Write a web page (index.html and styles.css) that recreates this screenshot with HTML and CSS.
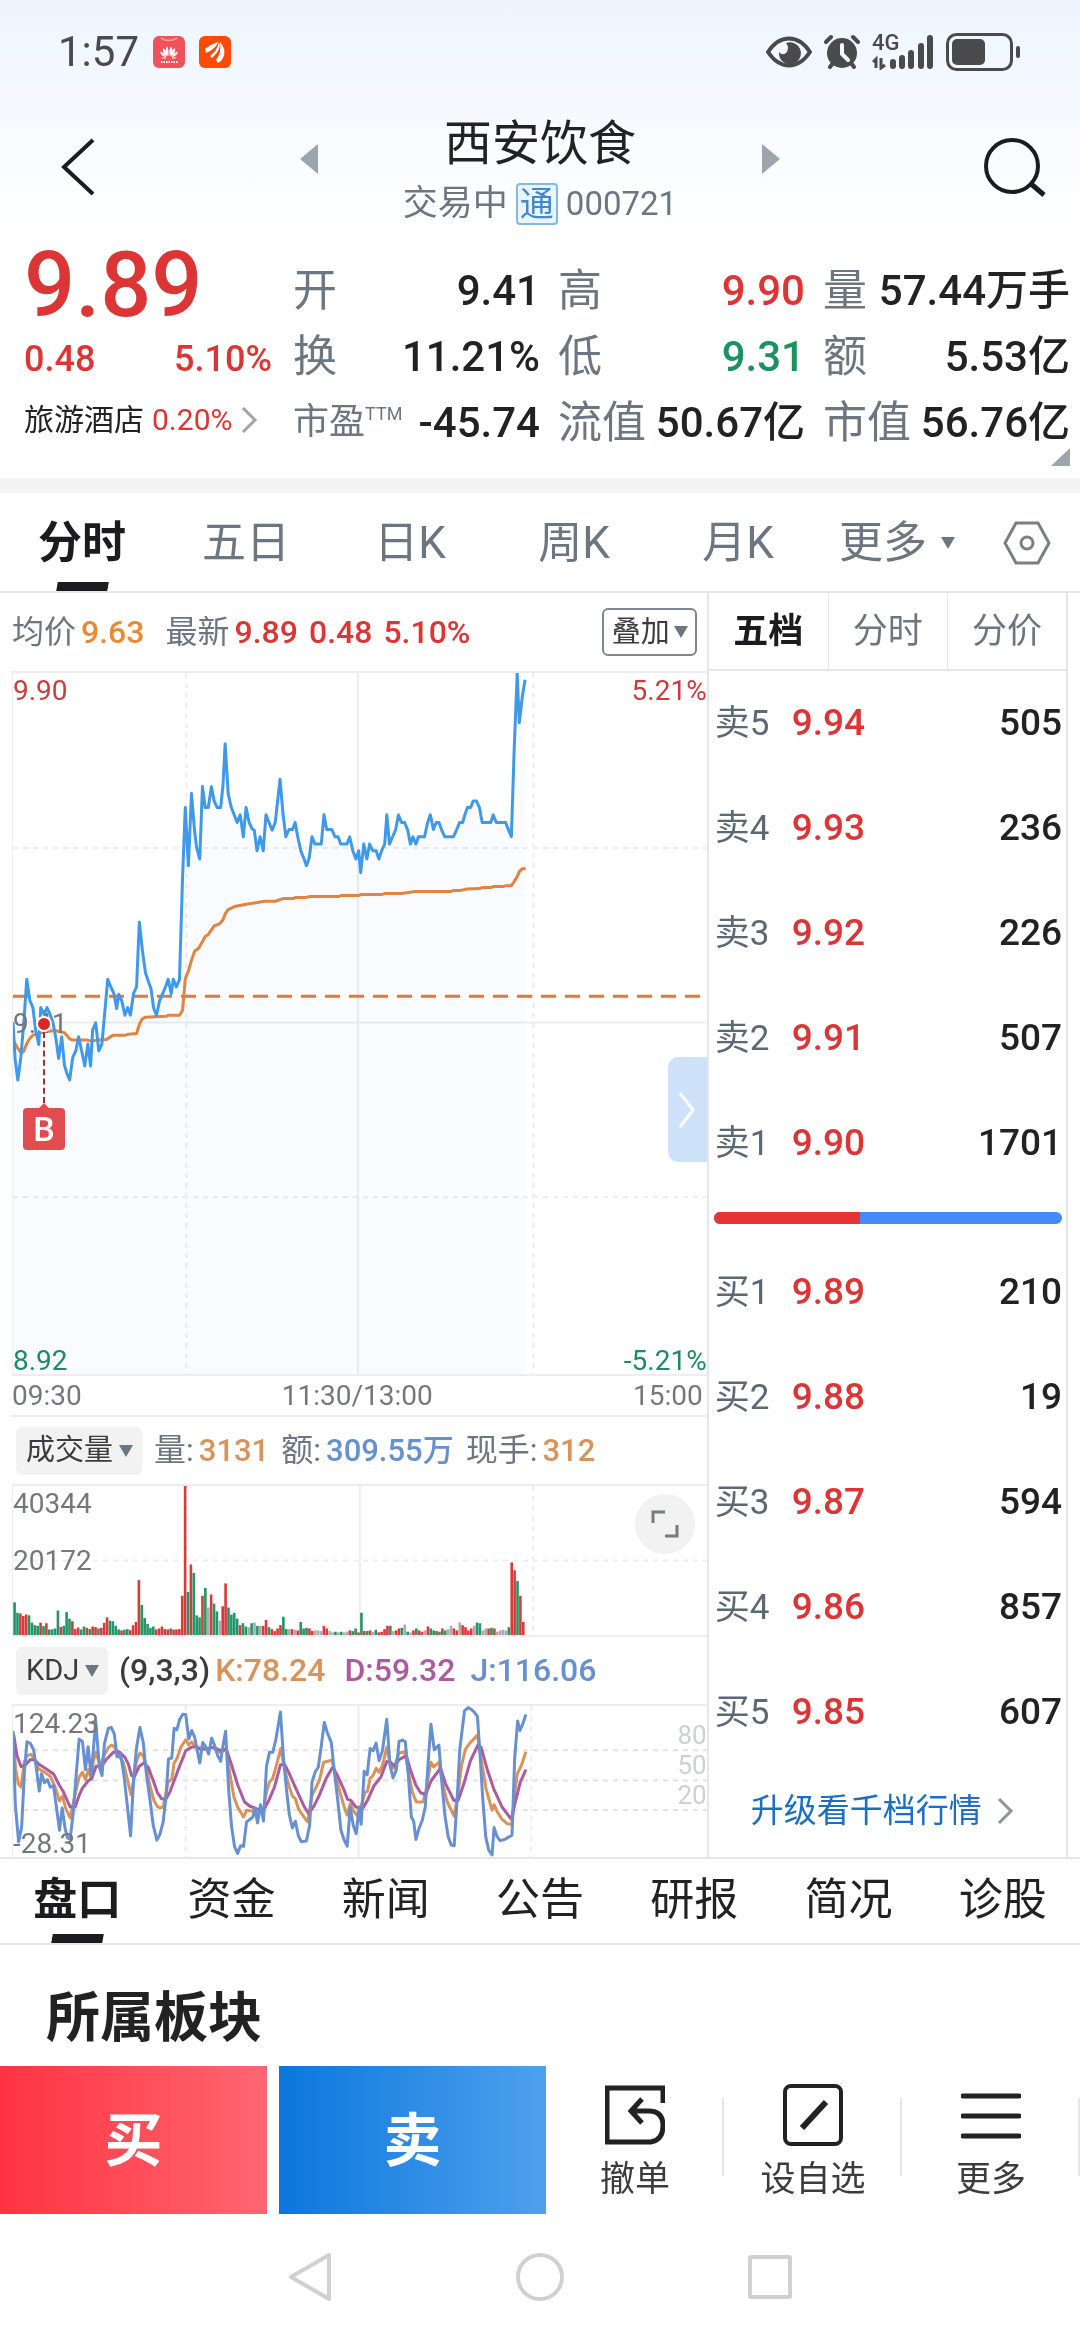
FILE: index.html
```html
<!DOCTYPE html>
<html lang="zh-CN">
  <head>
    <meta charset="UTF-8" />
    <meta name="viewport" content="width=device-width, initial-scale=1.0" />
    <title>西安饮食 000721</title>
    <link rel="stylesheet" href="styles.css">
  </head>
  <body>
    <div class="topArea">
      <div class="statusBar">
        <div class="statusLeft">
          <span class="clock">1:57</span>
          <svg width="32" height="32" viewBox="0 0 32 32">
            <rect width="32" height="32" rx="6" fill="#f0515a" />
            <path d="M8 2q8 5 16 0" fill="none" stroke="#f9a0a4" stroke-width="1.500" />
            <g fill="#fff">
              <path d="M15.400 20C12 17 12 12 14.500 10.500Q16 14 15.400 20z" />
              <path d="M16.600 20C20 17 20 12 17.500 10.500Q16 14 16.600 20z" />
              <path d="M14.500 20.500C10 18 9 14 10.500 12Q14 15 14.500 20.500z" />
              <path d="M17.500 20.500C22 18 23 14 21.500 12Q18 15 17.500 20.500z" />
              <path d="M13.500 21C9 20.500 7 18 7.500 15.500Q11.500 17 13.500 21z" />
              <path d="M18.500 21C23 20.500 25 18 24.500 15.500Q20.500 17 18.500 21z" />
              <path d="M8 21.500h5v1h-3zM24 21.500h-5v1h3z" />
            </g>
            <path d="M8 26h17" stroke="#fff" stroke-width="2" stroke-dasharray="1.500 1" />
          </svg>
          <svg width="32" height="32" viewBox="0 0 32 32">
            <rect width="32" height="32" rx="6" fill="#fd4a05" />
            <path d="M6 13Q12 8 19 6Q17 13 7 17z" fill="#fff" />
            <path d="M11 20Q18 15 20 6Q23 13 13 22z" fill="#fff" />
            <path d="M17 24Q23 17 21 6Q28 14 24 22Q22 26 19 27z" fill="#fff" />
          </svg>
        </div>
        <div class="statusRight">
          <svg width="46" height="32" viewBox="0 0 46 32">
            <path d="M2 16Q11 2.500 23 2.500T44 16Q35 29.500 23 29.500T2 16z" fill="none" stroke="#4a4a4c" stroke-width="4" />
            <path d="M20 7A11 11 0 1 1 13 16Q16 20 20 17Q24 12 20 7z" fill="#4a4a4c" />
          </svg>
          <svg width="36" height="36" viewBox="0 0 36 36">
            <circle cx="18" cy="19" r="15" fill="#4a4a4c" />
            <path d="M2 8L7 3M34 8L29 3M6 33L9 29M30 33L27 29" stroke="#4a4a4c" stroke-width="4" stroke-linecap="round" />
            <path d="M18 11v9l6 6" fill="none" stroke="#f5f8fe" stroke-width="4" stroke-linecap="round" />
          </svg>
          <div class="signal">
            <span>4G</span>
            <svg width="62" height="36" viewBox="0 0 62 36">
              <path d="M4 34V25L1 28M9 24v10l4-3" fill="none" stroke="#4a4a4c" stroke-width="3" />
              <path d="M21 28v4M30 24v8M39 19v13M49 12v20M58 4v28" stroke="#4a4a4c" stroke-width="6" stroke-linecap="round" />
            </svg>
          </div>
          <svg width="74" height="38" viewBox="0 0 74 38">
            <rect x="1.500" y="1.500" width="64" height="35" rx="9" fill="none" stroke="#4a4a4c" stroke-width="3" />
            <rect x="6" y="6" width="33" height="26" rx="5" fill="#4a4a4c" />
            <rect x="70" y="13" width="4" height="12" rx="2" fill="#4a4a4c" />
          </svg>
        </div>
      </div>

      <header class="header">
        <button class="iconBtn backBtn" aria-label="返回">
          <svg width="36" height="58" viewBox="0 0 36 58">
            <path d="M33 2L4 29l29 27" fill="none" stroke="#1c1c1e" stroke-width="4" />
          </svg>
        </button>
        <div class="titleWrap">
          <button class="arrowBtn" aria-label="上一只">
            <svg width="18" height="30" viewBox="0 0 18 30"><path d="M18 0v30L0 15z" fill="#9ca5ae" /></svg>
          </button>
          <div class="stockTitle">
            <h1>西安饮食</h1>
            <p>交易中<span class="tong">通</span><span class="num">000721</span></p>
          </div>
          <button class="arrowBtn" aria-label="下一只">
            <svg width="18" height="30" viewBox="0 0 18 30"><path d="M0 0v30l18-15z" fill="#9ca5ae" /></svg>
          </button>
        </div>
        <button class="iconBtn searchBtn" aria-label="搜索">
          <svg width="62" height="60" viewBox="0 0 62 60">
            <circle cx="28" cy="29" r="26" fill="none" stroke="#1c1c1e" stroke-width="4" />
            <path d="M46 46l14 12" stroke="#1c1c1e" stroke-width="5" />
          </svg>
        </button>
      </header>
    </div>

    <section class="quote">
      <div class="quoteMain">
        <div class="price up">9.89</div>
        <div class="change up"><span>0.48</span><span>5.10%</span></div>
        <a class="sector" href="#">旅游酒店 <span class="up">0.20%</span>
          <svg width="18" height="28" viewBox="0 0 18 28"><path d="M3 2l12 12L3 26" fill="none" stroke="#9ca5ae" stroke-width="3" /></svg>
        </a>
      </div>
      <dl class="stats">
        <div><dt>开</dt><dd>9.41</dd></div>
        <div><dt>换</dt><dd>11.21%</dd></div>
        <div><dt class="small">市盈<sup>TTM</sup></dt><dd>-45.74</dd></div>
      </dl>
      <dl class="stats">
        <div><dt>高</dt><dd class="up">9.90</dd></div>
        <div><dt>低</dt><dd class="down">9.31</dd></div>
        <div><dt>流值</dt><dd>50.67亿</dd></div>
      </dl>
      <dl class="stats">
        <div><dt>量</dt><dd>57.44万手</dd></div>
        <div><dt>额</dt><dd>5.53亿</dd></div>
        <div><dt>市值</dt><dd>56.76亿</dd></div>
      </dl>
    </section>

    <nav class="periodTabs">
      <button class="active">分时</button>
      <button>五日</button>
      <button>日K</button>
      <button>周K</button>
      <button>月K</button>
      <button class="moreTab">更多<i class="caret"></i></button>
      <button class="setTab" aria-label="设置">
        <svg width="48" height="44" viewBox="0 0 48 44">
          <path d="M13 2h22l11 20-11 20H13L2 22z" fill="none" stroke="#7b7f84" stroke-width="3" />
          <circle cx="24" cy="22" r="6" fill="none" stroke="#7b7f84" stroke-width="3" />
        </svg>
      </button>
    </nav>

    <main class="board">
      <section class="charts">
        <div class="chartInfo">
          <span class="grey">均价</span><b class="orange">9.63</b>
          <span class="grey latest">最新</span><b class="up">9.89</b><b class="up">0.48</b><b class="up">5.10%</b>
          <div class="picker outlined">
            <select aria-label="叠加"><option>叠加</option></select><i class="caret"></i>
          </div>
        </div>

        <div class="plot priceChart">
          <span class="tag tl up">9.90</span>
          <span class="tag tr up">5.21%</span>
          <span class="tag ml">9.41</span>
          <span class="tag bl down">8.92</span>
          <span class="tag br down">-5.21%</span>
          <svg viewBox="38 35 2021 2110" preserveAspectRatio="none">
            <path class="gridDash" d="M543 35v2110M1554 35v2110M38 562h2021M38 1613h2021" />
            <path class="gridLine" d="M1043 35v2110M38 1087h2021" />
            <path class="priceFill" id="priceFill" />
            <path class="zeroLine" d="M38 1008h2021" />
            <polyline class="avgLine" points="38,1140 52,1165 62,1178 69,1175 78,1150 87,1135 96,1125 130,1115 160,1111 188,1118 203,1136 212,1140 255,1140 265,1143 285,1140 310,1138 330,1125 365,1125 375,1122 398,1120 407,1090 415,1076 424,1071 450,1070 485,1068 490,1065 523,1065 532,1050 540,955 549,932 558,900 567,873 580,862 598,828 607,822 624,796 640,790 650,778 656,760 665,747 683,738 717,731 750,726 770,722 802,722 825,714 855,714 860,711 890,711 900,708 985,708 993,705 1045,705 1051,702 1112,702 1120,699 1170,699 1210,693 1313,693 1320,690 1340,690 1360,685 1397,684 1405,681 1430,681 1437,678 1465,678 1475,675 1490,675 1498,663 1507,648 1513,633 1522,624 1532,624" />
            <polyline class="priceLine" id="priceLine" points="38,1086 44,1195 52,1260 61,1190 70,1080 78,957 87,1020 96,1042 104,1110 113,1153 119,1042 128,1062 137,1042 146,1062 155,1090 163,1135 171,1195 180,1130 188,1216 195,1240 203,1260 212,1192 221,1172 229,1130 238,1172 247,1218 256,1152 264,1218 270,1110 279,1088 288,1172 297,1152 305,1060 314,957 323,980 332,1000 340,1045 346,1002 355,1022 364,1065 372,1042 380,1065 389,1000 398,980 406,785 415,870 424,937 433,965 440,985 448,1045 456,1065 465,1022 474,1000 483,978 490,957 499,1000 505,957 514,980 523,957 532,650 540,440 549,615 558,398 567,510 573,560 582,595 590,377 598,440 607,440 616,377 624,420 633,440 643,440 650,370 656,248 665,398 674,440 683,463 691,485 700,462 709,528 717,440 726,485 735,505 741,508 749,570 758,528 767,570 775,462 784,485 793,508 802,485 809,420 816,355 825,462 833,528 842,506 852,506 860,485 868,530 877,572 885,592 893,615 901,592 909,528 918,550 936,550 944,462 952,506 967,506 976,528 985,528 993,550 1011,550 1019,528 1028,570 1037,595 1045,570 1051,636 1060,550 1069,595 1077,550 1086,570 1096,570 1104,595 1112,570 1121,550 1127,462 1135,550 1144,528 1153,506 1161,462 1170,485 1179,485 1188,508 1196,550 1203,528 1212,550 1219,528 1237,528 1246,485 1254,462 1263,506 1271,485 1279,485 1287,508 1296,528 1321,528 1330,508 1339,485 1348,485 1355,460 1362,440 1371,440 1379,420 1388,420 1397,440 1405,485 1430,485 1437,462 1446,485 1473,485 1482,508 1490,528 1498,270 1507,36 1513,185 1522,105 1530,55" />
          </svg>
          <div class="buyMark"><i></i><b>B</b></div>
          <button class="drawer" aria-label="收起五档">
            <svg width="18" height="40" viewBox="0 0 18 40"><path d="M2 3l13 17L2 37" fill="none" stroke="#fff" stroke-width="3" /></svg>
          </button>
        </div>
        <div class="timeAxis"><span>09:30</span><span>11:30/13:00</span><span>15:00</span></div>

        <div class="indicator">
          <div class="picker">
            <select aria-label="副图指标一"><option>成交量</option></select><i class="caret"></i>
          </div>
          <span class="grey">量:</span><b class="tan">3131</b>
          <span class="grey">额:</span><b class="blue">309.55万</b>
          <span class="grey now">现手:</span><b class="tan">312</b>
        </div>
        <div class="plot subChart">
          <span class="tag tl">40344</span>
          <span class="tag ml">20172</span>
          <svg viewBox="0 0 240 456" preserveAspectRatio="none">
            <path class="gridDash" d="M60 0v456M180 0v456M0 228h240" />
            <path class="gridLine" d="M120 0v456" />
            <g id="volumeBars"></g>
          </svg>
          <button class="expand" aria-label="全屏">
            <svg width="28" height="28" viewBox="0 0 28 28"><path d="M2 13V2h12M26 15v11H14" fill="none" stroke="#76797d" stroke-width="3" /></svg>
          </button>
        </div>

        <div class="indicator">
          <div class="picker">
            <select aria-label="副图指标二"><option>KDJ</option></select><i class="caret"></i>
          </div>
          <b class="dark">(9,3,3)</b><b class="tan kVal">K:78.24</b><b class="purple">D:59.32</b><b class="blue">J:116.06</b>
        </div>
        <div class="plot subChart kdjChart">
          <div class="levels"><span>80</span><span>50</span><span>20</span></div>
          <svg viewBox="38 40 2088 456" preserveAspectRatio="none">
            <path class="gridDash dark" d="M38 174h2088M38 265h2088M38 354h2088" />
            <path class="gridDash" d="M558 40v456M1598 40v456" />
            <path class="gridLine" d="M1078 40v456" />
            <polyline class="kLine" points="40,150 46,230 54,275 62,285 72,210 80,190 92,186 103,200 115,230 130,238 150,252 165,285 178,327 187,312 197,350 210,378 222,320 237,255 247,240 256,262 265,232 273,258 280,205 288,180 300,220 312,190 325,165 335,158 345,165 355,190 370,210 382,260 393,308 402,260 410,205 420,182 430,190 440,230 450,280 462,325 472,343 480,348 490,345 505,270 516,260 523,212 531,200 543,165 558,142 567,158 576,148 587,165 620,170 640,165 660,180 680,170 690,240 703,315 714,345 732,375 741,355 757,357 774,362 792,355 801,300 810,270 820,258 832,215 844,168 855,230 870,285 879,312 888,320 897,350 910,370 925,390 938,310 948,290 960,265 973,210 998,204 1010,250 1022,300 1035,345 1044,370 1053,335 1062,355 1073,370 1085,345 1098,300 1105,298 1113,258 1122,250 1131,228 1140,240 1150,220 1163,165 1172,210 1184,228 1200,182 1218,178 1228,240 1240,300 1252,330 1272,330 1280,300 1296,210 1304,224 1320,210 1330,270 1345,330 1366,373 1378,300 1388,220 1400,170 1415,150 1436,128 1447,200 1462,290 1480,355 1486,338 1496,360 1508,380 1525,395 1540,398 1550,290 1556,245 1568,220 1582,178" />
            <polyline class="dLine" points="40,125 50,190 62,223 75,218 90,202 103,202 115,215 135,228 160,245 178,280 190,300 210,345 225,345 237,310 247,288 265,265 275,260 288,222 305,222 320,200 340,180 358,178 375,195 385,215 395,250 404,252 418,222 432,212 445,225 460,265 472,300 485,320 498,322 510,300 525,260 540,220 558,175 575,165 590,162 600,170 620,170 640,165 665,175 680,170 695,215 715,280 735,330 750,342 775,352 795,350 808,325 825,285 843,218 855,215 870,245 890,290 915,345 928,365 945,340 960,310 980,260 1000,225 1015,250 1035,295 1045,322 1055,325 1070,345 1090,350 1105,325 1125,280 1145,255 1163,208 1175,210 1186,222 1200,202 1222,190 1235,235 1250,278 1265,302 1280,308 1297,265 1325,228 1340,275 1365,325 1378,325 1395,275 1415,205 1438,157 1447,165 1465,230 1485,290 1510,345 1538,382 1550,330 1565,270 1582,232" />
            <polyline class="jLine" points="38,115 45,340 55,450 64,405 73,230 80,148 90,153 100,172 108,225 117,297 124,245 133,272 142,262 150,285 160,280 168,340 178,415 186,348 195,410 202,438 210,442 219,365 228,250 237,140 247,147 256,232 264,163 273,250 280,170 287,85 298,225 306,250 313,155 325,107 334,105 343,125 351,193 362,185 372,250 382,340 392,432 401,260 410,165 420,105 430,150 440,250 450,320 460,400 471,445 480,428 490,390 499,310 506,200 516,197 523,107 531,112 540,80 549,65 558,66 567,140 576,114 585,135 600,212 609,150 618,163 627,185 636,137 645,160 654,190 663,207 670,160 678,116 687,290 696,405 705,465 714,485 723,462 732,464 741,390 752,382 760,375 766,347 774,393 783,338 792,387 801,222 810,180 820,180 829,142 843,58 852,195 861,290 870,370 879,408 888,388 897,432 906,450 921,448 931,400 938,270 948,238 957,225 966,160 975,90 984,120 996,150 1005,235 1015,320 1025,415 1035,445 1044,463 1053,345 1062,400 1071,425 1080,345 1086,397 1095,237 1104,248 1113,168 1122,175 1131,152 1140,205 1150,175 1163,80 1173,220 1182,257 1192,232 1200,147 1210,143 1219,148 1228,250 1237,375 1244,388 1251,443 1260,410 1270,385 1279,345 1287,220 1296,95 1306,172 1320,158 1328,260 1338,370 1348,435 1357,460 1366,462 1375,320 1383,170 1397,55 1408,45 1417,50 1426,58 1436,72 1444,190 1452,320 1461,435 1470,475 1480,490 1486,407 1494,432 1504,447 1520,442 1540,430 1548,200 1557,85 1564,114 1572,95 1582,66" />
          </svg>
          <span class="tag tl">124.23</span>
          <span class="tag bl">-28.31</span>
        </div>
      </section>

      <aside class="book">
        <nav class="bookTabs">
          <button class="active">五档</button>
          <button>分时</button>
          <button>分价</button>
        </nav>
        <table class="orders">
          <tr><th scope="row">卖5</th><td class="up">9.94</td><td>505</td></tr>
          <tr><th scope="row">卖4</th><td class="up">9.93</td><td>236</td></tr>
          <tr><th scope="row">卖3</th><td class="up">9.92</td><td>226</td></tr>
          <tr><th scope="row">卖2</th><td class="up">9.91</td><td>507</td></tr>
          <tr><th scope="row">卖1</th><td class="up">9.90</td><td>1701</td></tr>
        </table>
        <div class="ratio"><i style="width: 42%"></i></div>
        <table class="orders">
          <tr><th scope="row">买1</th><td class="up">9.89</td><td>210</td></tr>
          <tr><th scope="row">买2</th><td class="up">9.88</td><td>19</td></tr>
          <tr><th scope="row">买3</th><td class="up">9.87</td><td>594</td></tr>
          <tr><th scope="row">买4</th><td class="up">9.86</td><td>857</td></tr>
          <tr><th scope="row">买5</th><td class="up">9.85</td><td>607</td></tr>
        </table>
        <a class="upgrade" href="#">升级看千档行情
          <svg width="18" height="28" viewBox="0 0 18 28"><path d="M3 2l12 12L3 26" fill="none" stroke="#8c949c" stroke-width="3" /></svg>
        </a>
      </aside>
    </main>

    <nav class="infoTabs">
      <button class="active">盘口</button>
      <button>资金</button>
      <button>新闻</button>
      <button>公告</button>
      <button>研报</button>
      <button>简况</button>
      <button>诊股</button>
    </nav>

    <h2 class="sectionTitle">所属板块</h2>

    <footer class="tradeBar">
      <button class="buy">买</button>
      <button class="sell">卖</button>
      <div class="tools">
        <button>
          <svg width="60" height="64" viewBox="0 0 60 64">
            <path d="M58 21V6H2v54h44q12-2 12-16 0-15-14-15H28M37 17L26 29l11 12" fill="none" stroke="#222" stroke-width="5" />
          </svg>
          撤单
        </button>
        <button>
          <svg width="60" height="64" viewBox="0 0 60 64">
            <rect x="2" y="4" width="56" height="58" rx="6" fill="none" stroke="#222" stroke-width="4" />
            <path d="M19 46l24-26" stroke="#222" stroke-width="6" />
          </svg>
          设自选
        </button>
        <button>
          <svg width="60" height="64" viewBox="0 0 60 64">
            <path d="M2 14h56M2 34h56M2 54h56" stroke="#222" stroke-width="5" stroke-linecap="round" />
          </svg>
          更多
        </button>
      </div>
    </footer>

    <nav class="sysNav">
      <button aria-label="系统返回">
        <svg width="46" height="50" viewBox="0 0 46 50"><path d="M42 3v44L4 25z" fill="none" stroke="#d0d0d0" stroke-width="4" stroke-linejoin="round" /></svg>
      </button>
      <button aria-label="主页">
        <svg width="50" height="50" viewBox="0 0 50 50"><circle cx="25" cy="25" r="22" fill="none" stroke="#d0d0d0" stroke-width="4" /></svg>
      </button>
      <button aria-label="最近任务">
        <svg width="46" height="50" viewBox="0 0 46 50"><rect x="3" y="5" width="40" height="40" rx="1" fill="none" stroke="#d0d0d0" stroke-width="4" /></svg>
      </button>
    </nav>

    <script src="chart.js"></script>
  </body>
</html>
```
FILE: styles.css
```css
* {
  box-sizing: border-box;
}
body {
  margin: 0;
  background: #fff;
  color: #222;
  font-family: Roboto, "Noto Sans CJK SC", sans-serif;
  line-height: 1.2;
}
h1, h2, p, dl, dd {
  margin: 0;
}
button, select {
  padding: 0;
  border: 0;
  background: none;
  color: inherit;
  font: inherit;
}
a {
  color: inherit;
  text-decoration: none;
}
svg {
  display: block;
  flex: none;
}
b {
  font-weight: 500;
}
.up {
  color: #dc3535;
}
.down {
  color: #1f9161;
}
.grey {
  color: #6b7681;
}
.orange {
  color: #e98a35;
}
.tan {
  color: #d9935a;
}
.blue {
  color: #6690d0;
}
.purple {
  color: #ab5ba0;
}
.dark {
  color: #3c3c3e;
}
.caret {
  border: 7px solid transparent;
  border-top: 12px solid #6b7681;
  border-bottom: 0;
}

/* status bar + title */
.topArea {
  background: linear-gradient(#eef5ff, #fff);
}
.statusBar {
  display: flex;
  justify-content: space-between;
  align-items: center;
  height: 104px;
  padding: 0 60px 0 58px;
}
.statusLeft, .statusRight {
  display: flex;
  align-items: center;
}
.statusLeft {
  gap: 14px;
}
.statusRight {
  gap: 12px;
}
.clock {
  color: #4a4a4c;
  font-size: 42px;
}
.signal {
  position: relative;
}
.signal span {
  position: absolute;
  top: -4px;
  left: 0;
  color: #4a4a4c;
  font-size: 22px;
  font-weight: 500;
}
.header {
  display: grid;
  grid-template-columns: 1fr 480px 1fr;
  align-items: center;
  padding: 8px 34px;
}
.backBtn {
  padding-left: 26px;
}
.searchBtn {
  justify-self: end;
}
.iconBtn {
  width: 62px;
  padding-bottom: 4px;
}
.titleWrap {
  display: flex;
  justify-content: space-between;
  align-items: center;
}
.arrowBtn {
  padding-bottom: 20px;
}
.stockTitle {
  text-align: center;
}
.stockTitle h1 {
  font-size: 48px;
  font-weight: 400;
  line-height: 64px;
}
.stockTitle p {
  display: flex;
  align-items: center;
  gap: 8px;
  margin-top: 6px;
  color: #6b7681;
  font-size: 35px;
  line-height: 44px;
}
.tong {
  width: 42px;
  border: 2px solid #86b8e4;
  border-radius: 4px;
  background: #eaf4ff;
  color: #3f8acb;
  font-size: 34px;
  line-height: 38px;
}
.stockTitle .num {
  font-size: 33px;
}

/* quote */
.quote {
  position: relative;
  display: grid;
  grid-template-columns: 251fr repeat(3, 247fr);
  gap: 18px;
  padding: 0 10px 22px 24px;
  border-bottom: 15px solid #f4f4f4;
}
.quote::after {
  content: "";
  position: absolute;
  right: 10px;
  bottom: 12px;
  border-left: 19px solid transparent;
  border-bottom: 18px solid #9ca5ae;
}
.quoteMain {
  padding-top: 12px;
}
.price {
  font-size: 90px;
  font-weight: 500;
  line-height: 80px;
}
.change {
  display: flex;
  justify-content: space-between;
  padding-right: 3px;
  font-size: 36px;
  font-weight: 500;
  line-height: 66px;
}
.sector {
  display: flex;
  align-items: center;
  gap: 8px;
  font-size: 30px;
  line-height: 56px;
  white-space: nowrap;
}
.stats {
  padding-top: 24px;
}
.stats div {
  display: flex;
  justify-content: space-between;
  align-items: center;
  height: 66px;
  white-space: nowrap;
}
.stats dt {
  color: #6b7681;
  font-size: 44px;
}
.stats dt.small {
  font-size: 36px;
}
.stats sup {
  font-size: 18px;
  line-height: 1;
  vertical-align: 14px;
}
.stats dd {
  font-size: 42px;
  font-weight: 500;
}

/* tabs */
.periodTabs, .infoTabs {
  display: grid;
  border-bottom: 2px solid #e6e6e6;
  font-size: 44px;
}
.periodTabs {
  grid-template-columns: repeat(6, 164fr) 96fr;
  height: 100px;
  color: #6b7681;
}
.infoTabs {
  grid-template-columns: repeat(7, 1fr);
  height: 88px;
  border-top: 2px solid #e6e6e6;
}
.periodTabs button, .infoTabs button {
  position: relative;
  display: flex;
  justify-content: center;
  align-items: center;
}
.periodTabs button {
  padding-top: 2px;
}
.infoTabs button {
  padding-bottom: 2px;
}
.periodTabs .moreTab {
  gap: 14px;
  padding-right: 10px;
}
.periodTabs .setTab {
  padding-right: 10px;
}
.periodTabs .active, .infoTabs .active {
  color: #1c1c1e;
  font-weight: 700;
}
.periodTabs .active::after, .infoTabs .active::after {
  content: "";
  position: absolute;
  bottom: 0;
  width: 51px;
  height: 9px;
  background: #1c1c1e;
  transform: skewX(-10deg);
}

/* charts and order book */
.board {
  display: grid;
  grid-template-columns: 696fr 360fr;
  margin: 0 12px;
  border-right: 2px solid #e6e6e6;
}
.chartInfo, .indicator {
  display: flex;
  align-items: center;
  gap: 5px;
  font-size: 32px;
  white-space: nowrap;
}
.chartInfo {
  height: 78px;
}
.chartInfo b + b {
  margin-left: 6px;
}
.chartInfo .latest {
  margin-left: 16px;
}
.picker {
  position: relative;
  display: flex;
  align-items: center;
  height: 48px;
  border-radius: 6px;
  background: #f2f2f2;
  color: #3c3c3e;
  font-size: 29px;
}
.picker select {
  height: 100%;
  padding: 0 28px 0 10px;
  appearance: none;
}
.picker .caret {
  position: absolute;
  right: 9px;
  pointer-events: none;
}
.outlined {
  margin: 0 10px 0 auto;
  border: 2px solid #7d8791;
  background: #fff;
}
.outlined select {
  padding: 0 24px 0 8px;
}
.outlined .caret {
  right: 7px;
}
.plot {
  position: relative;
  border: solid #ededed;
  border-width: 2px 0 2px 1px;
}
.plot svg {
  width: 100%;
  height: 100%;
}
.plot button svg {
  width: auto;
  height: auto;
}
.priceChart {
  height: 705px;
}
.subChart {
  height: 153px;
}
.gridLine, .gridDash, .zeroLine, .avgLine, .priceLine, .kLine, .dLine, .jLine {
  fill: none;
  stroke: #ededed;
  stroke-width: 2px;
  stroke-linejoin: round;
  vector-effect: non-scaling-stroke;
}
.gridDash {
  stroke-dasharray: 5 5;
}
.gridDash.dark {
  stroke: #e2e2e4;
}
.zeroLine {
  stroke: #dd7a3c;
  stroke-width: 3px;
  stroke-dasharray: 15 9;
}
.avgLine {
  stroke: #e2843f;
  stroke-width: 3px;
}
.priceLine {
  stroke: #4099e8;
  stroke-width: 3px;
}
.priceFill {
  fill: #f9fbff;
  mix-blend-mode: multiply;
}
.kLine {
  stroke: #d9935a;
  stroke-width: 3px;
}
.dLine {
  stroke: #ab5ba0;
  stroke-width: 3px;
}
.jLine {
  stroke: #6690d0;
  stroke-width: 3px;
}
.tag {
  position: absolute;
  color: #75777a;
  font-size: 28px;
  line-height: 36px;
}
.tag.up {
  color: #c93c3c;
}
.tag.down {
  color: #1f8a60;
}
.tl {
  top: 0;
  left: 0;
}
.tr {
  top: 0;
  right: 0;
}
.ml {
  top: 50%;
  left: 0;
  margin-top: -18px;
}
.bl {
  bottom: -5px;
  left: 0;
}
.br {
  right: 0;
  bottom: -5px;
}
.buyMark {
  position: absolute;
  top: calc(50% - 8px);
  left: 10px;
  display: flex;
  flex-direction: column;
  align-items: center;
  width: 42px;
}
.buyMark i {
  width: 16px;
  height: 16px;
  border: 2px solid #fff;
  border-radius: 50%;
  background: #dc2626;
}
.buyMark::before {
  content: "";
  order: 1;
  height: 71px;
  border-left: 2px dashed #9c3434;
}
.buyMark b {
  order: 2;
  width: 42px;
  border-radius: 4px;
  background: #e04c4f;
  color: #fff;
  font-size: 34px;
  line-height: 42px;
  text-align: center;
}
.buyMark::after {
  content: "";
  order: 1;
  border: 5px solid transparent;
  border-top: 0;
  border-bottom: 5px solid #e04c4f;
}
.drawer {
  position: absolute;
  top: 384px;
  right: 0;
  display: flex;
  justify-content: center;
  align-items: center;
  width: 39px;
  height: 105px;
  border-radius: 10px 0 0 10px;
  background: #cde2f8;
}
.timeAxis {
  display: flex;
  justify-content: space-between;
  padding-right: 4px;
  border-bottom: 2px solid #ededed;
  color: #75777a;
  font-size: 28px;
  line-height: 39px;
}
.indicator {
  height: 67px;
  padding-left: 4px;
}
.indicator .grey {
  margin-left: 7px;
}
.indicator b {
  font-size: 32px;
}
.indicator .grey + b {
  font-size: 31px;
}
.indicator b.dark {
  margin-left: 6px;
}
.indicator .kVal {
  margin-left: 0;
}
.indicator .purple {
  margin-left: 14px;
}
.indicator b.purple + b {
  margin-left: 10px;
}
.expand {
  position: absolute;
  top: 8px;
  right: 12px;
  display: flex;
  justify-content: center;
  align-items: center;
  width: 60px;
  height: 60px;
  border-radius: 50%;
  background: #f2f2f2;
}
.levels {
  position: absolute;
  top: 14px;
  right: 0;
  display: flex;
  flex-direction: column;
  color: #cdcfd3;
  font-size: 26px;
  line-height: 30px;
}
.kdjChart {
  border-bottom: 0;
}

.book {
  display: flex;
  flex-direction: column;
  border-left: 2px solid #e6e6e6;
}
.bookTabs {
  display: grid;
  grid-template-columns: repeat(3, 1fr);
  height: 78px;
  border-bottom: 2px solid #e6e6e6;
  color: #6b7681;
  font-size: 35px;
}
.bookTabs button {
  padding-top: 2px;
}
.bookTabs button + button {
  border-left: 1px solid #e6e6e6;
}
.bookTabs .active {
  color: #1c1c1e;
  font-weight: 700;
}
.orders {
  width: 100%;
  padding: 0 4px 0 6px;
  border-spacing: 0;
  font-size: 37px;
  font-weight: 500;
}
.orders th, .orders td {
  height: 105px;
  padding: 0;
  text-align: left;
}
.orders th {
  width: 77px;
  color: #5c6873;
  font-size: 35px;
  font-weight: 400;
}
.orders td:last-child {
  text-align: right;
}
.ratio {
  height: 12px;
  margin: 16px 4px 16px 5px;
  border-radius: 6px;
  background: #448bf9;
  overflow: hidden;
}
.ratio i {
  display: block;
  height: 100%;
  background: #e63333;
}
.upgrade {
  display: flex;
  flex: 1;
  justify-content: center;
  align-items: center;
  gap: 14px;
  padding-right: 10px;
  color: #1a6fc4;
  font-size: 33px;
}

/* bottom */
.sectionTitle {
  padding: 34px 46px 7px;
  font-size: 54px;
  line-height: 80px;
}
.tradeBar {
  display: flex;
  height: 148px;
}
.buy, .sell {
  flex: 267 0 0;
  padding-top: 4px;
  color: #fff;
  font-size: 58px;
  font-weight: 700;
}
.buy {
  margin-right: 12px;
  background: linear-gradient(90deg, #ff3341, #ff6672);
}
.sell {
  background: linear-gradient(90deg, #0a77dc, #4fa1ee);
}
.tools {
  display: flex;
  flex: 534 0 0;
  align-items: center;
}
.tools button {
  position: relative;
  display: flex;
  flex: 1;
  flex-direction: column;
  align-items: center;
  gap: 12px;
  padding-top: 4px;
  color: #3c3c3e;
  font-size: 35px;
  line-height: 44px;
}
.tools button::after {
  content: "";
  position: absolute;
  top: 20px;
  right: 0;
  width: 2px;
  height: 78px;
  background: #e6e6e6;
}
.sysNav {
  display: flex;
  justify-content: center;
  align-items: center;
  gap: 182px;
  height: 125px;
}
```
FILE: chart.js
```js
// one entry per minute: colour (r up, g down, x flat) + height
let volumes =
  "g100 g68 r66 r58 r63 g60 g38 g30 g28 r38 g27 r36 g17 g17 g20 g75 r25 g28 g70 g50 " +
  "r42 r18 r23 g17 g26 r22 g18 r26 r24 g20 r22 r37 r54 g44 g42 g28 g17 r14 g16 g18 " +
  "r15 r30 r40 r168 g92 g52 g34 g22 g26 r17 r20 r26 r18 r17 g20 r17 r17 r18 r120 r456 " +
  "g132 r216 g190 g60 g54 r120 g144 x84 r124 g96 g72 x44 r88 r158 g84 g62 g68 g50 r30 g36 " +
  "g26 x24 g36 x38 g28 x28 r28 r46 g24 r18 r12 r20 r30 g56 g18 x18 r18 x16 r14 g40 " +
  "g20 g22 r20 r12 x14 x14 x12 r28 r20 x12 x8 g10 x8 g10 x8 x10 r14 g12 g20 r8 " +
  "g68 r12 g12 r14 x10 g16 r8 r10 r18 r28 g28 x12 r14 r20 g22 x32 g10 x8 r14 g20 " +
  "r14 r10 x14 r26 g20 g14 r12 g10 r20 g14 x18 x28 r20 r14 x38 r30 r24 r14 r20 x28 " +
  "g38 g36 x14 x20 r20 g22 r20 x10 x14 x16 x14 g24 r222 r198 g165 r120 r40";
let colors = { r: "#d93a3a", g: "#259468", x: "#ababab" };

let bars = document.querySelector("#volumeBars");
volumes.split(" ").forEach((v, i) => {
  let h = Number(v.slice(1));
  let rect = document.createElementNS("http://www.w3.org/2000/svg", "rect");
  rect.setAttribute("x", i + 0.1);
  rect.setAttribute("y", 456 - h);
  rect.setAttribute("width", 0.9);
  rect.setAttribute("height", h);
  rect.setAttribute("fill", colors[v[0]]);
  bars.appendChild(rect);
});

// shade the area under the price line
let points = document.querySelector("#priceLine").getAttribute("points");
document.querySelector("#priceFill").setAttribute("d", "M" + points + " V2145 H38 Z");
```
